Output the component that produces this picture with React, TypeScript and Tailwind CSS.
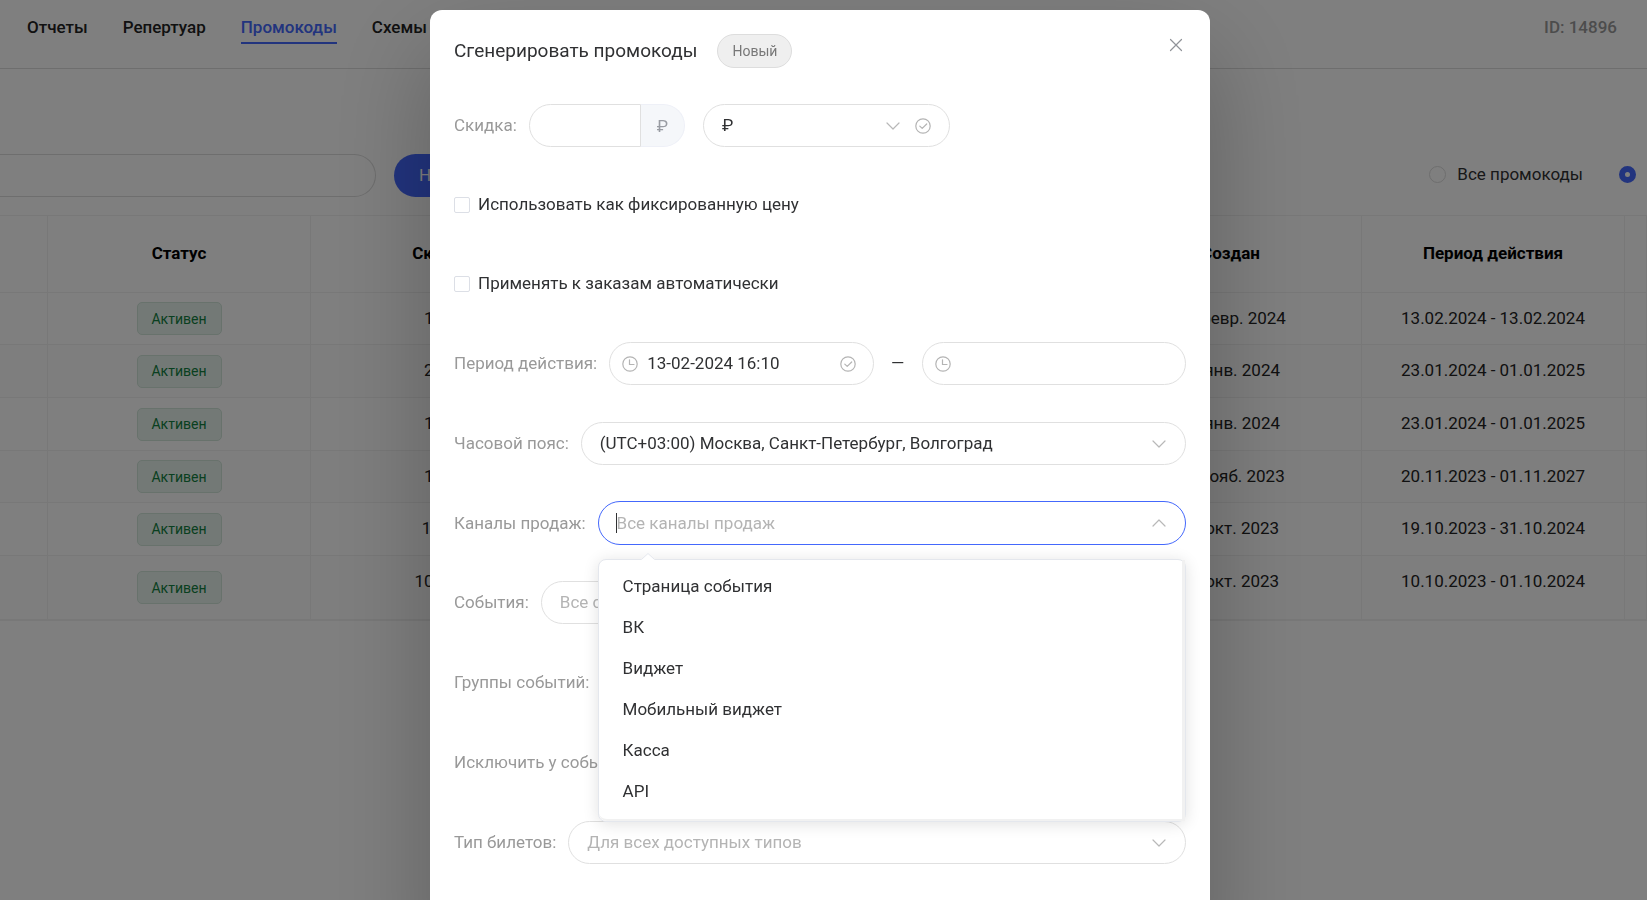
import React from "react";

type Promo = { discount: string; created: string; period: string };

const promos: Promo[] = [
  { discount: "10 %", created: "13 февр. 2024", period: "13.02.2024 - 13.02.2024" },
  { discount: "20 %", created: "23 янв. 2024", period: "23.01.2024 - 01.01.2025" },
  { discount: "10 %", created: "23 янв. 2024", period: "23.01.2024 - 01.01.2025" },
  { discount: "10 %", created: "20 нояб. 2023", period: "20.11.2023 - 01.11.2027" },
  { discount: "1 руб", created: "19 окт. 2023", period: "19.10.2023 - 31.10.2024" },
  { discount: "1000 %", created: "10 окт. 2023", period: "10.10.2023 - 01.10.2024" },
];

const channels = ["Страница события", "ВК", "Виджет", "Мобильный виджет", "Касса", "API"];

const field =
  "h-[43px] w-full appearance-none rounded-full border border-[#e0e0e0] bg-white pb-[2px] text-[#303133] outline-none placeholder:text-[#b4b4b4] placeholder:opacity-100";

function Chevron({ up = false }: { up?: boolean }) {
  return (
    <svg className="h-4 w-4" viewBox="0 0 16 16" fill="none" stroke="#b8b8b8" strokeWidth="1.2" strokeLinecap="round" strokeLinejoin="round">
      <path d={up ? "M2 11 8 5l6 6" : "M2 5l6 6 6-6"} />
    </svg>
  );
}

function CheckCircle() {
  return (
    <svg className="h-4 w-4" viewBox="0 0 16 16" fill="none" stroke="#b4b4b4" strokeWidth="1.2" strokeLinecap="round" strokeLinejoin="round">
      <circle cx="8" cy="8" r="7.2" />
      <path d="M4.8 8.1 7.2 10.4 11.7 6" />
    </svg>
  );
}

function Clock() {
  return (
    <svg className="h-4 w-4" viewBox="0 0 16 16" fill="none" stroke="#b4b4b4" strokeWidth="1.2" strokeLinecap="round">
      <circle cx="8" cy="8" r="7.2" />
      <path d="M7.5 3.8V8.5H12" />
    </svg>
  );
}

function Row({ id, label, short, children }: { id: string; label: string; short?: boolean; children: React.ReactNode }) {
  return (
    <div className={short ? "flex h-[42px] items-center" : "flex h-[43px] items-center"}>
      <label htmlFor={id} className="mr-3 shrink-0 pb-px text-[#999999]">
        {label}
      </label>
      {children}
    </div>
  );
}

function Combo({ id, placeholder }: { id: string; placeholder: string }) {
  return (
    <div className="relative grow">
      <input id={id} type="text" placeholder={placeholder} className={field + " pr-12 pl-[18px]"} />
      <span className="pointer-events-none absolute inset-y-0 right-[19px] flex items-center">
        <Chevron />
      </span>
    </div>
  );
}

function Check({ text }: { text: string }) {
  return (
    <label className="flex h-[42px] items-center gap-2 text-[#303133]">
      <input type="checkbox" className="h-4 w-4 appearance-none rounded-[2px] border border-[#dcdfe6] bg-white" />
      <span className="pb-[2px]">{text}</span>
    </label>
  );
}

function Background() {
  return (
    <div className="min-h-screen overflow-x-hidden bg-white">
      <header className="flex h-[69px] items-start justify-between border-b border-[#dcdcdc] pt-[14px] pr-[30px] pl-[27px] font-medium">
        <nav className="flex gap-[35px]">
          <a href="#reports" className="text-[#222222]">Отчеты</a>
          <a href="#repertoire" className="text-[#222222]">Репертуар</a>
          <a href="#promocodes" className="h-[30px] border-b-2 border-[#4468fc] text-[#4468fc]">Промокоды</a>
          <a href="#schemes" className="text-[#222222]">Схемы</a>
        </nav>
        <span className="text-[#999999]">ID: 14896</span>
      </header>

      <div className="mt-[85px] flex h-[43px] items-center">
        <input
          type="search"
          aria-label="Поиск"
          className="h-[43px] w-[376px] appearance-none rounded-r-full border border-l-0 border-[#dcdcdc] bg-white"
        />
        <button type="button" className="ml-[18px] h-[43px] rounded-full bg-[#4468fc] px-[25px] pb-[2px] text-white">
          Новый промокод
        </button>
        <div className="ml-auto flex items-center pr-[11px] pb-[3px]">
          <label className="mr-9 flex items-center gap-[11px] text-[#303133]">
            <input type="radio" name="scope" className="h-[17px] w-[17px] appearance-none rounded-full border border-[#dcdcdc] bg-white" />
            Все промокоды
          </label>
          <input
            type="radio"
            name="scope"
            defaultChecked
            aria-label="Активные"
            className="h-[17px] w-[17px] appearance-none rounded-full border-[6px] border-[#4468fc] bg-white"
          />
        </div>
      </div>

      <table className="mt-[18px] w-full table-fixed border-separate border-spacing-0 border-t border-[#f0f0f0] text-center text-[#222222]">
        <colgroup>
          <col className="w-[48px]" />
          <col className="w-[263px]" />
          <col className="w-[263px]" />
          <col className="w-[263px]" />
          <col className="w-[263px]" />
          <col className="w-[262px]" />
          <col className="w-[263px]" />
          <col />
        </colgroup>
        <thead>
          <tr className="h-[77px] text-black">
            {["", "Статус", "Скидка", "", "", "Создан", "Период действия", ""].map((t, i) => (
              <th key={i} className="border-r border-b border-[#f0f0f0] p-0 pb-[2px] font-bold">{t}</th>
            ))}
          </tr>
        </thead>
        <tbody>
          {promos.map((p, r) => {
            const last = r === promos.length - 1;
            const cell = "border-r border-[#f0f0f0] px-0 " + (last ? "border-b-2 pt-3 pb-0 align-top" : "border-b pt-0 pb-[2px] align-middle");
            return (
              <tr key={r} className={(last ? "h-[65px]" : r === 0 || r === 3 ? "h-[52px]" : "h-[53px]") + (r % 2 ? " bg-[#fcfcfc]" : "")}>
                <td className={cell} />
                <td className={"border-r border-[#f0f0f0] p-0 align-middle " + (last ? "border-b-2" : "border-b")}>
                  <span className="mx-auto flex h-[33px] w-[85px] items-center justify-center rounded-[5px] border border-[#d0e4d9] bg-[#e7f3ec] text-[14px] text-[#128040]">
                    Активен
                  </span>
                </td>
                <td className={cell}>{p.discount}</td>
                <td className={cell} />
                <td className={cell} />
                <td className={cell}>{p.created}</td>
                <td className={cell}>{p.period}</td>
                <td className={cell} />
              </tr>
            );
          })}
        </tbody>
      </table>
    </div>
  );
}

function ChannelsField() {
  return (
    <div className="relative grow">
      <input
        id="channels"
        type="text"
        role="combobox"
        aria-expanded="true"
        aria-controls="channel-list"
        placeholder="Все каналы продаж"
        className="block h-[44px] w-full appearance-none rounded-full border border-[#4468fc] bg-white pr-12 pb-px pl-[18px] outline-none placeholder:text-[#b4b4b4] placeholder:opacity-100"
      />
      <span className="absolute top-3 left-[18px] h-5 w-px bg-[#303133]" />
      <span className="pointer-events-none absolute inset-y-0 right-[19px] flex items-center">
        <Chevron up />
      </span>
      <div className="absolute top-[58px] right-0 left-0 z-10">
        <div className="rounded-lg border border-[#e4e7ed] bg-white shadow-[0_2px_16px_rgba(0,0,0,0.12)]">
          <div className="overflow-hidden rounded-l-lg border-r-[3px] border-b-2 border-[#f1f1f1]">
            <ul id="channel-list" role="listbox" className="pt-[6px] pb-[7px]">
              {channels.map((c) => (
                <li key={c} role="option" aria-selected="false" className="flex h-[41px] items-center px-6 pb-px text-[#303133]">
                  {c}
                </li>
              ))}
            </ul>
          </div>
        </div>
        <svg className="absolute -top-[6px] left-[43px] h-[7px] w-[14px]" viewBox="0 0 14 7">
          <path d="M0 7 7 0l7 7z" fill="#fff" />
          <path d="M0.5 6.5 7 0.5l6.5 6" fill="none" stroke="#e4e7ed" />
        </svg>
      </div>
    </div>
  );
}

function Modal() {
  return (
    <div className="fixed inset-0 overflow-x-hidden overflow-y-auto bg-black/50 pt-[10px] pr-[7px] [scrollbar-width:none]">
      <section
        role="dialog"
        aria-modal="true"
        aria-labelledby="dialog-title"
        className="mx-auto w-full max-w-[780px] rounded-xl bg-white px-6 pt-6 pb-24 shadow-[0_40px_100px_rgba(0,0,0,0.25)]"
      >
        <div className="flex items-start">
          <div className="flex h-[34px] items-center gap-5">
            <h1 id="dialog-title" className="text-[19px] text-[#303133]">Сгенерировать промокоды</h1>
            <span className="flex h-[34px] items-center rounded-full border border-[#dddddd] bg-[#efefef] px-[14px] text-[14px] text-[#777777]">Новый</span>
          </div>
          <button type="button" aria-label="Закрыть" className="mt-[3px] ml-auto flex h-4 w-5 items-center justify-center">
            <svg className="h-4 w-4" viewBox="0 0 16 16" stroke="#909399" strokeWidth="1.2" strokeLinecap="round">
              <path d="M2.5 2.5l11 11M13.5 2.5l-11 11" />
            </svg>
          </button>
        </div>

        <form className="mt-9 flex flex-col gap-[37px]" onSubmit={(e) => e.preventDefault()}>
          <Row id="discount" label="Скидка:">
            <div className="flex w-[156px]">
              <input id="discount" type="text" className="h-[43px] w-[112px] rounded-l-full border border-[#e0e0e0] bg-white px-4 outline-none" />
              <span className="flex h-[43px] grow items-center justify-center rounded-r-full border border-l-0 border-[#eef0f7] bg-[#f5f7fa] text-[#999ca3]">₽</span>
            </div>
            <div className="relative ml-[18px] w-[247px]">
              <select aria-label="Единица скидки" className={field + " px-[18px]"}>
                <option>₽</option>
              </select>
              <span className="pointer-events-none absolute inset-y-0 right-[19px] flex items-center gap-[14px]">
                <Chevron />
                <CheckCircle />
              </span>
            </div>
          </Row>

          <Check text="Использовать как фиксированную цену" />
          <Check text="Применять к заказам автоматически" />

          <Row id="from" label="Период действия:">
            <div className="relative grow basis-0">
              <input id="from" type="text" defaultValue="13-02-2024 16:10" className={field + " px-[37px]"} />
              <span className="pointer-events-none absolute inset-y-0 left-[13px] flex items-center"><Clock /></span>
              <span className="pointer-events-none absolute inset-y-0 right-[18px] flex items-center"><CheckCircle /></span>
            </div>
            <span className="w-12 pb-[2px] text-center text-[#303133]">—</span>
            <div className="relative grow basis-0">
              <input aria-label="Окончание периода" type="text" className={field + " px-[37px]"} />
              <span className="pointer-events-none absolute inset-y-0 left-[13px] flex items-center"><Clock /></span>
            </div>
          </Row>

          <Row id="zone" label="Часовой пояс:">
            <div className="relative grow">
              <select id="zone" className={field + " px-[18px]"}>
                <option>(UTC+03:00) Москва, Санкт-Петербург, Волгоград</option>
              </select>
              <span className="pointer-events-none absolute inset-y-0 right-[19px] flex items-center"><Chevron /></span>
            </div>
          </Row>

          <Row id="channels" label="Каналы продаж:" short>
            <ChannelsField />
          </Row>
          <Row id="events" label="События:">
            <Combo id="events" placeholder="Все события" />
          </Row>
          <Row id="groups" label="Группы событий:">
            <Combo id="groups" placeholder="Все группы" />
          </Row>
          <Row id="exclude" label="Исключить у событий:">
            <Combo id="exclude" placeholder="Не выбрано" />
          </Row>
          <Row id="types" label="Тип билетов:">
            <Combo id="types" placeholder="Для всех доступных типов" />
          </Row>
        </form>
      </section>
    </div>
  );
}

export default function App() {
  return (
    <div className="font-[Roboto,'Liberation_Sans',sans-serif] text-[17px] leading-[26px]">
      <Background />
      <Modal />
    </div>
  );
}
